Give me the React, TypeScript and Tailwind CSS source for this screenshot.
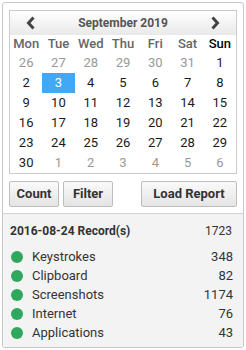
const days = ["Mon", "Tue", "Wed", "Thu", "Fri", "Sat", "Sun"]

const cells: { d: number; muted?: boolean }[] = [
  { d: 26, muted: true }, { d: 27, muted: true }, { d: 28, muted: true }, { d: 29, muted: true },
  { d: 30, muted: true }, { d: 31, muted: true }, { d: 1 },
  ...Array.from({ length: 29 }, (_, i) => ({ d: i + 2 })),
  { d: 1, muted: true }, { d: 2, muted: true }, { d: 3, muted: true },
  { d: 4, muted: true }, { d: 5, muted: true }, { d: 6, muted: true },
]

const stats = [
  { name: "Keystrokes", value: 348 },
  { name: "Clipboard", value: 82 },
  { name: "Screenshots", value: 1174 },
  { name: "Internet", value: 76 },
  { name: "Applications", value: 43 },
]

function Chevron({ dir }: { dir: "l" | "r" }) {
  return (
    <svg width="10" height="14" viewBox="0 0 10 14">
      <path
        d={dir === "l" ? "M7.5 1.5 L2.5 7 L7.5 12.5" : "M2.5 1.5 L7.5 7 L2.5 12.5"}
        fill="none"
        stroke="#444"
        strokeWidth="3"
      />
    </svg>
  )
}

function Btn({ label, w }: { label: string; w: string }) {
  return (
    <button
      className={`${w} h-[26px] rounded-[2px] border border-[#bdbdbd] bg-gradient-to-b from-[#fafafa] to-[#e4e4e4] text-[13px] font-bold text-[#333]`}
    >
      {label}
    </button>
  )
}

export default function App() {
  return (
    <div className="p-[2px] font-['Roboto',sans-serif]">
      <div className="w-[242px] h-[346px] rounded-[3px] border border-[#c8c8c8] bg-white overflow-hidden flex flex-col">
        <div className="px-[6px] pt-[7px]">
          <div className="border border-[#cccccc]">
            <div className="h-[24px] flex items-center justify-between px-[16px] bg-gradient-to-b from-white to-[#e9e9e9]">
              <Chevron dir="l" />
              <span className="text-[12px] font-bold text-[#555]">September 2019</span>
              <Chevron dir="r" />
            </div>
            <div className="grid grid-cols-7">
              {days.map((d) => (
                <div
                  key={d}
                  className={`h-[18px] flex items-center justify-center text-[13px] font-medium ${d === "Sun" ? "text-black" : "text-[#666]"}`}
                >
                  {d}
                </div>
              ))}
              {cells.map((c, i) => (
                <div
                  key={i}
                  className={`h-[20px] flex items-center justify-center text-[13px] ${
                    !c.muted && c.d === 3
                      ? "bg-[#42a8f3] text-white"
                      : c.muted
                      ? "text-[#999]"
                      : "text-[#1a1a1a]"
                  }`}
                >
                  {c.d}
                </div>
              ))}
            </div>
          </div>
          <div className="flex mt-[7px] gap-[4px]">
            <Btn label="Count" w="w-[50px]" />
            <Btn label="Filter" w="w-[50px]" />
            <div className="flex-1" />
            <Btn label="Load Report" w="w-[96px]" />
          </div>
        </div>
        <div className="mt-[6px] flex-1 border-t border-[#d4d4d4] bg-[#f3f3f3] px-[6px] pt-[8px]">
          <div className="flex justify-between text-[12px] font-bold text-[#333] px-[1px]">
            <span>2016-08-24 Record(s)</span>
            <span className="font-normal text-[#333] pr-[4px]">1723</span>
          </div>
          <div className="mt-[7px] flex flex-col">
            {stats.map((s) => (
              <div key={s.name} className="h-[19px] flex items-center text-[13px] text-[#333]">
                <span className="ml-[2px] w-[12px] h-[12px] rounded-full bg-[#2fa85e]" />
                <span className="ml-[9px] flex-1">{s.name}</span>
                <span className="pr-[4px]">{s.value}</span>
              </div>
            ))}
          </div>
        </div>
      </div>
    </div>
  )
}
